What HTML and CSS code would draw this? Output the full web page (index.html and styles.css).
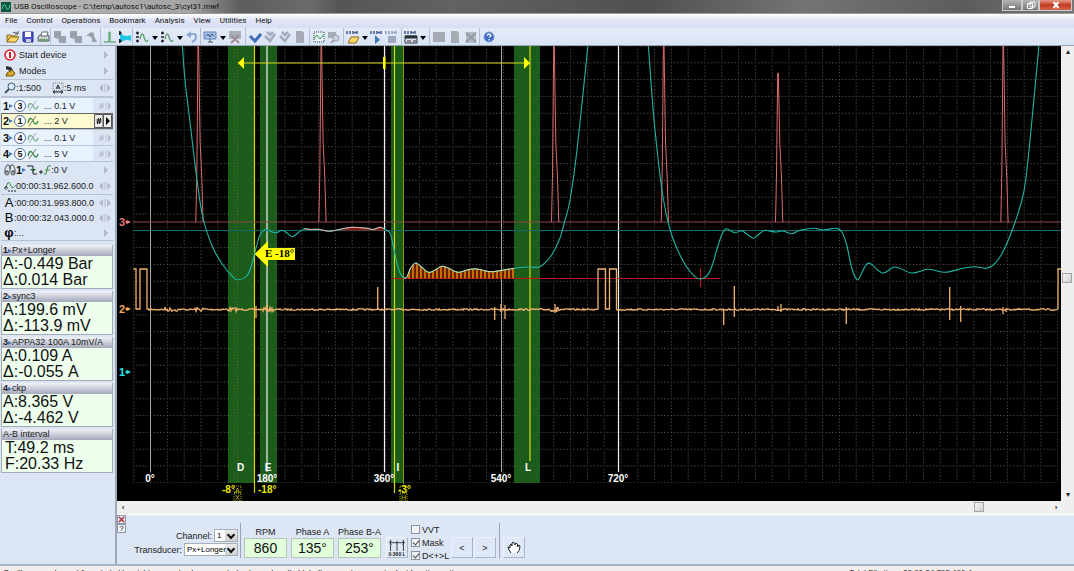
FILE: index.html
```html
<!DOCTYPE html>
<html lang="en">
<head>
<meta charset="utf-8">
<title>USB Oscilloscope</title>
<link rel="stylesheet" href="styles.css">
</head>
<body>
<svg class="defs" aria-hidden="true">
  <symbol id="i-open" viewBox="0 0 14 14"><path d="M1 12V5h4l1 1h5v2" fill="#f3c95a" stroke="#8a6a1c"/><path d="M1 12l3-5h9l-3 5z" fill="#ffd866" stroke="#8a6a1c"/><path d="M7 3q3-2 5 1M12 1v3H9" fill="none" stroke="#555"/></symbol>
  <symbol id="i-save" viewBox="0 0 14 14"><path d="M2 2h10v10H3l-1-1z" fill="#4b50c8" stroke="#2b2f91"/><path d="M4 2h6v5H4z" fill="#fff"/><path d="M5 9h5v3H5z" fill="#ccd"/></symbol>
  <symbol id="i-print" viewBox="0 0 14 14"><path d="M2 7l2-2h8l1 1v5H2z" fill="#c9d0cc" stroke="#556"/><path d="M5 6l1-4h6l-1 4z" fill="#fff" stroke="#667"/><path d="M3 9h9v3H3z" fill="#8a9a90"/><path d="M4 10h5" stroke="#4a4"/></symbol>
  <symbol id="i-copy" viewBox="0 0 14 14"><path d="M1 1h7v7H1zM6 6h7v7H6z" fill="#9ba1ad"/><path d="M3 8h3v3" fill="none" stroke="#9ba1ad"/></symbol>
  <symbol id="i-tool" viewBox="0 0 14 14"><path d="M1 6l5-4 3 1v3l3 6H7V8L4 6z" fill="#9ba1ad"/></symbol>
  <symbol id="i-pulse" viewBox="0 0 14 14"><path d="M1 12h5V2h1v10h6" fill="none" stroke="#3b9a4b"/></symbol>
  <symbol id="i-band" viewBox="0 0 14 14"><path d="M2 3l3 2q3 2 8 0v6q-4-2-8 0l-3 1z" fill="#1fc8e8"/><path d="M1.500 1l2 2-2 2zM1.500 9l2 2-2 2z" fill="#222" stroke="#222"/></symbol>
  <symbol id="i-wave" viewBox="0 0 14 14"><path d="M1 3h3M2.500 1.500v3M1 7h3M1 11h3M2.500 9.500v3" stroke="#222" stroke-width="1.300"/><path d="M5 9q2-9 4-2t4 3" fill="none" stroke="#5f9a6c" stroke-width="1.300"/></symbol>
  <symbol id="i-undo" viewBox="0 0 14 14"><path d="M4 5q7-3 7 2 0 3-4 5" fill="none" stroke="#8ba3d0" stroke-width="2"/><path d="M1 5l5-4v7z" fill="#8ba3d0"/></symbol>
  <symbol id="i-mon" viewBox="0 0 14 14"><path d="M1 2h12v7H1z" fill="#9fc0e8" stroke="#6a86b8"/><path d="M3 6l2-2 2 3 2-3 2 2M5 12h5M7 9v3" stroke="#456" fill="none"/></symbol>
  <symbol id="i-monx" viewBox="0 0 14 14"><path d="M1 1h12v8H1z" fill="#a9aeb9"/><path d="M3 5l8 8M11 5l-8 8" stroke="#a08c96" stroke-width="2"/></symbol>
  <symbol id="i-check" viewBox="0 0 14 14"><path d="M2 6l5 5 6-7" fill="none" stroke="currentColor" stroke-width="3"/></symbol>
  <symbol id="i-check2" viewBox="0 0 14 14"><path d="M2 6l5 5 5-7M4 2l3 3 3-3" fill="none" stroke="#a5abba" stroke-width="2.500"/></symbol>
  <symbol id="i-doc" viewBox="0 0 14 14"><path d="M3 1h6l2 2v10H3z" fill="#a6abb5"/></symbol>
  <symbol id="i-chart" viewBox="0 0 14 14"><path d="M2 2h10v10H2z" fill="#e7f3f8" stroke="#345" stroke-dasharray="1 1"/><path d="M2 9l3-4 3 4 4-5" fill="none" stroke="#3a9a4a"/></symbol>
  <symbol id="i-find" viewBox="0 0 14 14"><path d="M1 2h8v6H1z" fill="#a7adb8"/><circle cx="9" cy="8" r="3" fill="#ccd2de" stroke="#a7a0b8"/><path d="M7 10l-3 3" stroke="#a7a0b8" stroke-width="2"/></symbol>
  <symbol id="i-dots" viewBox="0 0 14 14"><path d="M1 1v3M4 1v3M7 1v3M8 2.500h2M11 1v3" stroke="#44548c" stroke-width="1.500"/></symbol>
  <symbol id="i-hand" viewBox="0 0 14 14"><path d="M4 12Q1 8 1 6l2 1V4l1-1 1 2V2l1.500-1L8 4l1-2 1.500 1V6L12 4l1 1q0 5-3 7" fill="#fff" stroke="#222"/></symbol>
  <symbol id="i-sine" viewBox="0 0 12 12"><path d="M1 8q2-8 5-2t5 0" fill="none" stroke="#398b43" stroke-width="1.400"/><path d="M2 11L9 1" stroke="#777"/></symbol>
  <symbol id="i-lr" viewBox="0 0 14 8"><path d="M5 0v8L1 4zM9 0v8l4-4z" fill="#b4bac6"/><path d="M7 0v8" stroke="#b4bac6"/></symbol>
  <symbol id="i-hr" viewBox="0 0 14 8"><path d="M3 1L2 7M5 1L4 7M1 3h5M1 5h5M8 0v8" stroke="#b4bac6" fill="none" stroke-width=".8"/><path d="M10 0v8l3-4z" fill="#b4bac6"/></symbol>
  <symbol id="i-r" viewBox="0 0 14 8"><path d="M6 0v8l4-4z" fill="#b4bac6"/></symbol>
</svg>

<div class="app">
  <header class="title">
    <svg class="logo" viewBox="0 0 10 10"><path d="M0 0h10v10H0z" fill="#0c5544"/><path d="M1 7q2-8 4-2t4-2" fill="none" stroke="#3fd39c"/></svg>
    <h1>USB Oscilloscope - C:\temp\autosc1\autosc_3\cyl31.mwf</h1>
    <div class="winbtns">
      <button aria-label="Minimize"><svg viewBox="0 0 10 8"><path d="M2 5h6v2H2z" fill="#fff"/></svg></button><button class="mid" aria-label="Restore"><svg viewBox="0 0 10 8"><path d="M4 1h5v5H4zM1.500 2.500h5v5h-5z" fill="none" stroke="#fff"/></svg></button><button class="close" aria-label="Close"><svg viewBox="0 0 10 8"><path d="M2.500 1l5 6M7.500 1l-5 6" stroke="#fff" stroke-width="2"/></svg></button>
    </div>
  </header>
  <nav class="menu"><a href="#">File</a><a href="#">Control</a><a href="#">Operations</a><a href="#">Bookmark</a><a href="#">Analysis</a><a href="#">View</a><a href="#">Utilities</a><a href="#">Help</a></nav>

  <div class="toolbar">
    <div class="group tight"><button aria-label="Open"><svg><use href="#i-open"/></svg></button><button aria-label="Save"><svg><use href="#i-save"/></svg></button><button aria-label="Print"><svg><use href="#i-print"/></svg></button></div>
    <div class="group"><button aria-label="Copy view"><svg><use href="#i-copy"/></svg></button><button aria-label="Copy all"><svg><use href="#i-copy"/></svg></button><button aria-label="Tool"><svg><use href="#i-tool"/></svg></button></div>
    <div class="group tight"><button aria-label="Pulse"><svg><use href="#i-pulse"/></svg></button><button aria-label="Range"><svg><use href="#i-band"/></svg></button></div>
    <div class="group"><button aria-label="Vertical scale"><svg><use href="#i-wave"/></svg></button><button class="caret" aria-label="More scales"></button><button aria-label="Offset"><svg><use href="#i-wave"/></svg></button><button class="caret" aria-label="More offsets"></button><button aria-label="Undo"><svg><use href="#i-undo"/></svg></button></div>
    <div class="group loose"><button aria-label="Display"><svg><use href="#i-mon"/></svg></button><button class="caret" aria-label="More displays"></button><button aria-label="Close display"><svg><use href="#i-monx"/></svg></button></div>
    <div class="group tight loose"><button class="blue" aria-label="Apply"><svg><use href="#i-check"/></svg></button><button aria-label="Apply next"><svg><use href="#i-check2"/></svg></button><button aria-label="Apply all"><svg><use href="#i-check2"/></svg></button><button aria-label="Document"><svg><use href="#i-doc"/></svg></button></div>
    <div class="group tight loose"><button aria-label="Chart"><svg><use href="#i-chart"/></svg></button><button aria-label="Find"><svg><use href="#i-find"/></svg></button></div>
    <div class="group tight loose"><button aria-label="Open script"><svg viewBox="0 0 14 14"><use href="#i-dots" width="14" height="14"/><path d="M2 13l3-6h8l-3 6z" fill="#ffd866" stroke="#8a6a1c"/></svg></button><button class="caret" aria-label="More scripts"></button><button aria-label="Run script"><svg viewBox="0 0 14 14"><use href="#i-dots" width="14" height="14"/><path d="M5 5v9l5-4z" fill="#3c78b4"/></svg></button><button aria-label="Stop script"><svg viewBox="0 0 14 14"><use href="#i-dots" width="14" height="14" opacity=".5"/><path d="M3 6h8v7H3z" fill="#a0a8bd"/></svg></button></div>
    <div class="group tight loose"><button aria-label="Panels"><svg viewBox="0 0 14 14"><use href="#i-dots" width="14" height="14"/><path d="M1 6h12v7H1z" fill="#dde" stroke="#334"/><path d="M1 7h12" stroke="#233" stroke-width="3"/><path d="M3 11h4M9 11h3" stroke="#333"/></svg></button><button class="caret" aria-label="More panels"></button></div>
    <div class="group"><button aria-label="Grid"><svg viewBox="0 0 14 14"><path d="M1 2h12v10H1z" fill="#a5aab4"/></svg></button><button aria-label="Notes"><svg><use href="#i-doc"/></svg></button><button aria-label="Delete"><svg viewBox="0 0 14 14"><path d="M2 2h10v11H2z" fill="#b4b9c3"/><path d="M2 3l10 9M12 3L2 12" stroke="#929aa4" stroke-width="2"/></svg></button></div>
    <div class="group last"><button aria-label="Help"><svg viewBox="0 0 14 14"><circle cx="7" cy="7" r="5" fill="#3b6bc4" stroke="#7f9edb"/><path d="M5 5.500q2-2.500 4 0 0 1-2 2M7 9v1.500" fill="none" stroke="#fff" stroke-width="1.300"/></svg></button></div>
  </div>

  <div class="main">
    <aside class="side">
      <div class="row"><svg class="ic" viewBox="0 0 12 12"><circle cx="6" cy="6" r="5" fill="#fff" stroke="#e01f27" stroke-width="1.600"/><path d="M6 3v6" stroke="#e01f27" stroke-width="2"/></svg><span class="big">Start device</span><svg class="end"><use href="#i-r"/></svg></div>
      <div class="row"><svg class="ic" viewBox="0 0 12 12"><path d="M2 1l5 1 2 3-3 1-4-2z" fill="#333"/><path d="M3 8l5-3 3 3-2 3H2z" fill="#d9a927" stroke="#6d5212"/></svg><span class="big">Modes</span><svg class="end"><use href="#i-r"/></svg></div>
      <hr>
      <div class="row"><svg class="ic" viewBox="0 0 12 12"><circle cx="7.500" cy="4.500" r="3.500" fill="#d6ecff" stroke="#456"/><path d="M5 7l-4 4" stroke="#456" stroke-width="2"/></svg><span>:1:500</span><svg class="ic pan" viewBox="0 0 12 12"><path d="M1 1h10v8H1z" fill="none" stroke="#777" stroke-dasharray="1 1"/><path d="M4 7l2-4 2 4M5 6h2M2 10h8M3 8.500L1 10l2 1.500M9 8.500L11 10l-2 1.500" fill="none" stroke="#222"/></svg><span>:5 ms</span><svg class="end"><use href="#i-lr"/></svg></div>
      <hr>
      <div class="row ch"><b>1</b><i></i><em>3</em><svg class="ic dim"><use href="#i-sine"/></svg><span>... 0.1 V</span><svg class="end"><use href="#i-hr"/></svg></div>
      <div class="row ch on"><b>2</b><i></i><em>1</em><svg class="ic"><use href="#i-sine"/></svg><span>... 2 V</span><svg class="end act" viewBox="0 0 18 14"><path d="M0 0h18v14H0z" fill="#ececec"/><path d="M.500 .500h8.500v13H.500zM9.500 .500h8v13h-8z" fill="none" stroke="#555"/><path d="M12 3v8l4-4z" fill="#000"/><path d="M4.500 4l-1 6M6.500 4l-1 6M2.500 6h5M2.500 8h5" stroke="#000" stroke-width=".9"/></svg></div>
      <div class="row ch"><b>3</b><i></i><em>4</em><svg class="ic dim"><use href="#i-sine"/></svg><span>... 0.1 V</span><svg class="end"><use href="#i-hr"/></svg></div>
      <div class="row ch"><b>4</b><i></i><em>5</em><svg class="ic"><use href="#i-sine"/></svg><span>... 5 V</span><svg class="end"><use href="#i-hr"/></svg></div>
      <hr>
      <div class="row trig"><svg class="ic" viewBox="0 0 12 12"><path d="M1 9V5l2-4h2l1 4 1-4h2l2 4v4M3 6v4M9 6v4M6 4v4" fill="none" stroke="#555"/><circle cx="3" cy="9" r="2" fill="none" stroke="#555"/><circle cx="9" cy="9" r="2" fill="none" stroke="#555"/></svg><b>1</b><i></i><svg class="ic" viewBox="0 0 12 12"><path d="M1 2h6v8h4" fill="none" stroke="#222"/><path d="M4 5h6L7 8z" fill="#263"/></svg><svg class="ic" viewBox="0 0 12 12"><path d="M0 8h4M2 6v4" stroke="#222"/><path d="M5 10h2l2-8h3M6 6h5" fill="none" stroke="#3c8b43"/></svg><span>:0 V</span><svg class="end"><use href="#i-r"/></svg></div>
      <div class="row"><svg class="ic" viewBox="0 0 12 12"><path d="M2 8q2-9 4-4t3 4 3-3" fill="none" stroke="#3c8b43"/><path d="M0 8h4M2 6v4M4 11h8" stroke="#222" stroke-dasharray="2 1"/></svg><span>00:00:31.962.600.0</span><svg class="end"><use href="#i-lr"/></svg></div>
      <hr>
      <div class="row low"><strong>A</strong><span>:00:00:31.993.800.0</span><svg class="end"><use href="#i-lr"/></svg></div>
      <div class="row low"><strong>B</strong><span>:00:00:32.043.000.0</span><svg class="end"><use href="#i-lr"/></svg></div>
      <div class="row low"><strong class="phi">φ</strong><span>:...</span><svg class="end"><use href="#i-r"/></svg></div>
      <hr>
      <div class="cards">
        <section><h2><b>1</b><i></i>Px+Longer</h2><p>A:-0.449 Bar<br>Δ:0.014 Bar</p></section>
        <section><h2><b>2</b><i></i>sync3</h2><p>A:199.6 mV<br>Δ:-113.9 mV</p></section>
        <section><h2><b>3</b><i></i>APPA32 100A 10mV/A</h2><p>A:0.109 A<br>Δ:-0.055 A</p></section>
        <section><h2><b>4</b><i></i>ckp</h2><p>A:8.365 V<br>Δ:-4.462 V</p></section>
        <section><h2>A-B interval</h2><p class="in">T:49.2 ms<br>F:20.33 Hz</p></section>
      </div>
    </aside>

    <div class="work">
      <div class="view">
        <svg class="scope" viewBox="117 46 944 455" role="img" aria-label="Waveforms">
          <defs>
            <pattern id="grid" x="133.300" y="62.300" width="16.800" height="16.800" patternUnits="userSpaceOnUse"><path d="M0 .500H16.800M.500 0V16.800" stroke="#6a6a6a" stroke-dasharray="1 2.360" fill="none"/></pattern>
            <pattern id="hatch" width="4" height="8" patternUnits="userSpaceOnUse"><path d="M0 0h4v8H0z" fill="#632000"/><path d="M1 0v8" stroke="#c86c08" stroke-width="2"/></pattern>
          </defs>
          <path d="M133 46H1058V483H133z" fill="url(#grid)"/>
          <g fill="#1b5c1b"><path d="M228 46h26v437h-26zM260 46h17v437h-17zM391 46h13v437h-13zM514 46h26v437h-26z"/></g>
          <path d="M228 46h26v437h-26zM260 46h17v437h-17zM514 46h26v437h-26z" fill="url(#grid)" opacity=".4"/>
          <path d="M150.500 46V472M501.500 46V472" stroke="#a5a5a5"/>
          <path d="M267 46V472M384.500 46V472M618.500 46V472" stroke="#f2f2f2" stroke-width="1.200"/>
          <path d="M237.500 46V484" stroke="#6b6410" stroke-dasharray="1 2"/>
          <path d="M403.500 46V484" stroke="#8f9a10"/>
          <path d="M254.500 46V493M394.500 46V493M530 46V461" stroke="#d7d711" stroke-width="1.200"/>
          <path d="M133 222H1061" stroke="#8a4a4a" stroke-width="1.200"/>
          <path d="M133 230.500H1061" stroke="#12686a"/>
          <path d="M391 278.500H720M700.500 268V287" stroke="#c01414"/>
          <path id="fill" fill="url(#hatch)"/>
          <path id="dark" fill="#8a1818"/>
          <path id="pink" fill="none" stroke="#d96c6c"/>
          <path id="cyan" fill="none" stroke="#1fb5a5" stroke-width="1.100"/>
          <path id="warm" fill="none" stroke="#f0b0a0"/>
          <path id="ripple" fill="none" stroke="#e3d9a0"/>
          <path id="tan" fill="none" stroke="#f2b26c" stroke-width="1.300"/>
          <path d="M238 63H530" stroke="#d7d711"/><path d="M238 63l6-6v12zM530 63l-6-6v12zM383 57h2.500v12H383z" fill="#ff0"/>
          <path d="M254.500 254L268 241v7h27v12h-27v7z" fill="#ff0"/>
          <text x="265" y="257" class="flag">E -18°</text>
          <g class="lbl mid"><text x="240.500" y="471">D</text><text x="268" y="471">E</text><text x="398" y="471">I</text><text x="528" y="471">L</text>
          <text x="150" y="482">0°</text><text x="267" y="482">180°</text><text x="384" y="482">360°</text><text x="501" y="482">540°</text><text x="618" y="482">720°</text></g>
          <g class="tag"><path d="M234 486h7v7h-7zM234 493h7v8h-7zM400 486h7v7h-7zM400 493h7v8h-7z"/><text x="235" y="493">A</text><text x="235" y="500">X</text><text x="401" y="500">H</text></g>
          <g class="lbl y"><text x="222" y="493">-8°</text><text x="258" y="493">-18°</text><text x="398" y="493">-3°</text></g>
          <g class="num"><g fill="#e57e7e"><text x="119" y="226">3</text><path d="M125 222l2-2 4 2-4 2z"/></g><g fill="#f2a65c"><text x="119" y="313">2</text><path d="M125 309l2-2 4 2-4 2z"/></g><g fill="#1fe8e8"><text x="119" y="376">1</text><path d="M125 372l2-2 4 2-4 2z"/></g></g>
        </svg>
        <div class="vbar"><button aria-label="Scroll up">▴</button><span class="gap a"></span><span class="thumb"></span><span class="gap b"></span><button aria-label="Scroll down">▾</button></div>
      </div>
      <div class="hbar"><button aria-label="Scroll left">‹</button><span class="gap a"></span><span class="thumb"></span><span class="gap b"></span><button aria-label="Scroll right">›</button></div>
      <div class="panel">
        <div class="grip"><button class="x" aria-label="Close panel"><svg viewBox="0 0 8 8"><path d="M1 1l6 6M7 1L1 7" stroke="#b3424e" stroke-width="2"/></svg></button><button aria-label="Panel help">?</button></div>
        <div class="picks">
          <div><label for="chan">Channel:</label><select id="chan"><option>1</option></select></div>
          <div><label for="trans">Transducer:</label><select id="trans" class="wide"><option>Px+Longer</option></select></div>
        </div>
        <div class="vr"></div>
        <dl class="reads"><div><dt>RPM</dt><dd>860</dd></div><div><dt>Phase A</dt><dd>135°</dd></div><div><dt>Phase B-A</dt><dd>253°</dd></div></dl>
        <button class="pb scale" aria-label="Degree scale"><svg viewBox="0 0 18 13"><path d="M1 4h16M3 2L1 4l2 2M15 2l2 2-2 2M2 1v12M9 2v11M16 1v12" stroke="#333" fill="none"/></svg><span>0·360 L</span></button>
        <div class="checks"><label><input type="checkbox">VVT</label><label><input type="checkbox" checked>Mask</label><label><input type="checkbox" checked>D&lt;+&gt;L</label></div>
        <button class="pb">&lt;</button><button class="pb">&gt;</button>
        <div class="vr"></div>
        <button class="pb" aria-label="Pan"><svg class="hand"><use href="#i-hand"/></svg></button>
      </div>
    </div>
  </div>
  <footer class="status"><span>Oscilloscope channel 1 control : Use right mouse to charge control : charge bandhold. Left mouse to request a fast function options</span><span class="time">Total File time: 00:00:34.793.496.4</span></footer>
</div>
<script src="scope.js"></script>
</body>
</html>
```
FILE: styles.css
```css
* { box-sizing: border-box; }
body { margin: 0; overflow: hidden; font: 9px "Liberation Sans", Arial, sans-serif; color: #222; }
button { padding: 0; border: 0; background: none; font: inherit; color: inherit; }
.defs { position: absolute; width: 0; height: 0; }
.app { display: flex; flex-direction: column; height: calc(100vh + 10px); background: #dbe5f4; }

.title { display: flex; align-items: flex-start; height: 14px; flex: none; padding-left: 1px; background: linear-gradient(90deg, #b9b9b9 0, #a3a3a3 190px, #5d5d5d 240px, #6b6b6b 310px, #555 340px, #626262 450px, #505050 60%, #747474 75%, #5c5c5c 90%, #777); border-bottom: 1px solid #999; }
.logo { width: 10px; height: 10px; margin-top: 2px; }
.title h1 { margin: 0 auto 0 3px; font: 8px/14px Roboto, "Noto Sans", sans-serif; color: #111; }
.winbtns { display: flex; margin-right: 2px; }
.winbtns button { display: flex; justify-content: center; align-items: center; width: 20px; height: 11px; background: linear-gradient(#b5b5b5, #777); border: 1px solid #ccc; border-top: 0; }
.winbtns .mid { width: 17px; }
.winbtns .close { width: 33px; background: linear-gradient(#e29a88, #c23a20 50%, #d2654a); }
.winbtns svg { width: 10px; height: 8px; }

.menu { display: flex; gap: 9px; flex: none; height: 14px; padding-left: 5px; background: linear-gradient(#fff, #e2e7f7 40%, #d7def2); font: 8px/14px Roboto, "Noto Sans", sans-serif; }
.menu a { color: #111; text-decoration: none; }
.toolbar { display: flex; flex: none; height: 18px; padding-left: 5px; background: linear-gradient(#e4ebf8, #d9e4f5); border-bottom: 1px solid #9aa5b5; }
.group { display: flex; align-items: center; margin-right: 1px; border-right: 1px solid #b6c0d0; }
.group.last { border: 0; }
.group.loose { padding-right: 2px; }
.group button { display: flex; justify-content: center; width: 16px; }
.group.tight button { width: 15px; }
.group svg { width: 14px; height: 14px; }
.group .blue { color: #3f6db5; }
.group .caret, .group.tight .caret { width: 9px; }
.caret::before { content: ""; margin-top: 2px; border: 3px solid transparent; border-top: 4px solid #000; border-bottom: 0; }

.main { display: flex; flex: 1; min-height: 0; }
.side { flex: none; width: 117px; padding: 1px 2px 0 1px; border-right: 2px solid #9fa8b8; }
.side hr { height: 1px; margin: 0; border: 0; background: #b7c1d0; }
.row { display: flex; align-items: center; height: 16px; padding: 0 1px 0 3px; white-space: nowrap; }
.row.low { height: 15px; }
.ic { flex: none; width: 12px; height: 12px; }
.row .big { margin-left: 3px; }
.pan { margin-left: 11px; }
.dim { opacity: .6; }
.end { flex: none; width: 14px; height: 8px; margin-left: auto; }
.row strong { width: 10px; font: 13px "Liberation Sans", sans-serif; color: #000; text-align: center; }
.row .phi { font-weight: 700; }
.row b { font: 700 11px "Liberation Sans", sans-serif; color: #111; }
.row i, h2 i { display: inline-block; border: 2px solid transparent; border-left: 4px solid #4a75b0; border-right: 0; }
.row em { width: 12px; height: 12px; margin: 0 1px; border: 1px solid #4f6fa6; border-radius: 50%; background: #fff; font: 700 9px/10px "Liberation Sans", sans-serif; text-align: center; color: #111; }
.ch { padding-left: 2px; border-top: 1px solid #b9c6d8; background: linear-gradient(90deg, #e9f2ff 92px, transparent 92px); }
.ch span { margin-left: 5px; }
.ch.on { padding: 0 0 0 1px; border: 1px solid #666; background: #fffbd0; }
.end.act { width: 18px; height: 14px; }
.trig .ic + .ic { margin-left: 1px; }
.cards { display: grid; gap: 2px; margin-top: 4px; }
.cards section { border: 1px solid #a3abb8; border-top: 0; background: #eeffee; }
.cards h2 { height: 11px; margin: 0; padding-left: 1px; background: linear-gradient(#f2f3f8, #a3a8ba); font: 9px/11px "Liberation Sans", sans-serif; color: #222; white-space: nowrap; }
.cards p { height: 32px; margin: 0; padding-left: 1px; font-size: 16px; line-height: 16px; color: #111; white-space: nowrap; }
.cards .in { padding-left: 3px; }

.work { display: flex; flex: 1; flex-direction: column; min-width: 0; }
.view { display: flex; flex: 1; min-height: 0; background: #000; }
.scope { flex: 1; min-width: 0; width: 100%; height: 100%; }
.lbl { font: 700 10px "Liberation Sans", sans-serif; fill: #fff; }
.lbl.mid { text-anchor: middle; }
.lbl.y { fill: #e8e800; }
.num { font: 700 11px "Liberation Sans", sans-serif; }
.flag { font: 700 11px "Liberation Serif", serif; }
.tag { font: 7px "Liberation Sans", sans-serif; fill: #cc0; }
.tag path { fill: none; stroke: #aa0; stroke-dasharray: 1 1; }
.vbar, .hbar { display: flex; flex: none; background: #efefef; font-size: 8px; }
.vbar { flex-direction: column; width: 13px; }
.hbar { height: 13px; }
.vbar button { height: 12px; line-height: 12px; }
.hbar button { width: 12px; font-weight: 700; }
.hbar button:last-child { margin-right: 12px; }
.thumb { flex: none; width: 10px; height: 10px; margin: 1px; border: 1px solid #a5a5a5; background: linear-gradient(135deg, #f8f8f8, #cfcfcf); }
.vbar .a { flex: 215; }
.vbar .b { flex: 205; }
.hbar .a { flex: 845; }
.hbar .b { flex: 65; }

.panel { display: flex; flex: none; align-items: flex-end; height: 50px; padding-bottom: 6px; border-top: 1px solid #fff; background: #dce6f4; }
.grip { display: flex; flex-direction: column; align-self: flex-start; width: 9px; }
.grip button { height: 9px; border: 1px solid #8c98ac; background: #eef2f8; font-size: 8px; line-height: 7px; }
.grip svg { display: block; width: 7px; height: 7px; }
.picks { display: grid; gap: 1px; width: 112px; margin-bottom: 2px; }
.picks div { position: relative; display: flex; justify-content: flex-end; align-items: center; gap: 2px; }
.picks select { width: 24px; height: 13px; padding: 0 0 0 2px; border: 1px solid #a7afbb; border-radius: 0; appearance: none; background: #fff linear-gradient(#e9e9e9, #cfcfcf) right / 12px 100% no-repeat; font: 8px "Liberation Sans", sans-serif; }
.picks .wide { width: 54px; }
.picks div::after { content: ""; position: absolute; right: 4px; top: 3px; width: 4px; height: 4px; border: solid #111; border-width: 0 2px 2px 0; transform: rotate(45deg); pointer-events: none; }
.vr { align-self: stretch; width: 1px; margin: 8px 3px 0 2px; background: #9aa3b1; }
.reads { display: flex; gap: 4px; margin: 0; }
.reads div { width: 43px; text-align: center; white-space: nowrap; }
.reads dd { height: 20px; margin: 0; border: 1px solid #b6c5ba; background: #e2ffdb; font-size: 14px; line-height: 18px; color: #111; }
.reads dt { height: 11px; line-height: 11px; }
.pb { display: flex; flex-direction: column; justify-content: center; align-items: center; width: 22px; height: 21px; margin-right: 1px; border: 1px solid #eef3fb; border-right-color: #a9b4c6; border-bottom-color: #a9b4c6; background: #dfe8f6; }
.scale { margin: 0 3px 0 5px; }
.scale svg { width: 18px; height: 12px; }
.scale span { font-size: 5px; font-weight: 700; }
.hand { width: 14px; height: 14px; }
.checks { display: grid; width: 40px; margin-bottom: -4px; }
.checks label { display: flex; align-items: center; gap: 2px; height: 13px; white-space: nowrap; }
.checks input { position: relative; flex: none; width: 9px; height: 9px; margin: 0; border: 1px solid #8b93a0; appearance: none; background: #f1f3f6; }
.checks input:checked::after { content: ""; position: absolute; left: 2px; top: 0; width: 3px; height: 5px; border: solid #444; border-width: 0 1px 1px 0; transform: rotate(40deg); }
.status { display: flex; flex: none; height: 17px; border-top: 2px solid #a9b3c0; background: #f1edec; font: 8px/14px "Liberation Sans", Arial, sans-serif; color: #111; padding: 0 102px 0 3px; justify-content: space-between; white-space: nowrap; }
```
FILE: scope.js
```js
const set = (id, d) => document.getElementById(id).setAttribute('d', d);

// Catmull-Rom spline through the flat list x, y, x, y, ...
function smooth(v) {
  const p = [];
  for (let i = 0; i < v.length; i += 2) p.push([v[i], v[i + 1]]);
  let d = `M${p[0]}`;
  for (let i = 0; i < p.length - 1; i++) {
    const a = p[i - 1] || p[i], b = p[i], c = p[i + 1], e = p[i + 2] || c;
    d += `C${b[0] + (c[0] - a[0]) / 6} ${b[1] + (c[1] - a[1]) / 6} ${c[0] - (e[0] - b[0]) / 6} ${c[1] - (e[1] - b[1]) / 6} ${c}`;
  }
  return d;
}

const warm = [298,233, 304,228.7, 311,229.5, 318,229.3, 327,231, 332,231, 340,229.3, 352,227.3, 367,228.3, 373,229.5, 380,227.3, 384.3,229];
const ripple = [404,278, 407,276.7, 410.7,268, 415.7,263, 420,265.7, 428.3,272.3, 435,270, 441.7,266.3, 448,268, 458,272.3, 468,269.7, 477,269, 490,271.7, 502,270.3, 514,268.3];
const cyan = [182.3,45, 185,80, 190,122, 196.7,178, 203,218, 213,248, 223,265, 233,277, 238,279.7, 246.7,276, 251.7,265, 256,248, 260,235, 266,229.3, 272,232, 277,232.6, 282,230.3, 287,233, 292.3,236.7,
  ...warm, 390,233, 393,245, 396.7,262, 400,273, ...ripple, 527,267, 538,267.3, 543,264.7, 551.7,255, 560,238, 565,220, 570,200, 577,150, 588,45];
const next = [648.3,45, 653.3,112, 658,158, 662.7,195, 669.3,227, 676.7,248, 686.7,267, 695,276.7, 700,279, 706.7,276, 711.7,267, 716.7,250, 721.7,235, 726,228.7, 735,232.7, 741.7,230.7, 748,235, 754,238.3, 759,234, 765,230.3, 775,232, 783,231, 791.7,233.7, 800,230.3, 815,228.3, 823,230, 835.7,228.3, 841.7,231.7, 846.7,245, 851.7,268, 856.7,279.3, 860,276.7, 865,266.7, 870,263.3, 882.7,273, 895,267, 911.7,273, 928,269.3, 945,272.3, 963,268.3, 975,266.7, 986.7,268.3, 995,263.3, 1003,251.7, 1013,228, 1022,200, 1025.7,180, 1031,130, 1039,45];

set('cyan', smooth(cyan) + smooth(next));
set('warm', smooth(warm.slice(2)));
set('ripple', smooth(ripple));
set('fill', smooth(ripple) + 'V278.500H404Z');
set('dark', smooth([340,230.5, 352,227.3, 367,228.3, 373,229.5, 380,227.3, 384.3,230.5]) + 'Z');

// Ignition current pulses: centre x and peak y
set('pink', [[198.3, 45], [321.3, 45], [554, 45], [663.7, 45], [778, 73], [1003.3, 45]]
  .map(([x, y]) => `M${x - 2.5} 222L${x - 1.5} 175L${x - .3} ${y}H${x + .3}L${x + 1.8} 142L${x + 3.5} 178L${x + 4.8} 222`).join(''));

// Sync trace: square pulses, noisy baseline, narrow spikes
let seed = 7;
const rnd = () => (seed = (seed * 16807) % 2147483647) / 2147483647;
const noise = (x1, x2) => {
  let d = '';
  for (let x = x1; x <= x2; x += 1) {
    const hot = [171, 201, 232, 268, 555].some(c => Math.abs(x - c) < 7);
    d += `L${x} ${309.5 + (rnd() - .5) * (hot ? 4 : 1.6)}`;
  }
  return d;
};
set('tan', 'M133.500 269H136V309H140V269H147V309' + noise(148, 598) + 'V269H605.500V309H609.500V269H616.500V309' + noise(617, 1058) + 'V269H1061'
  + [[256,306,318], [267,305,312], [377.7,287,310], [494.7,307,320], [501,304,312], [505,305,319], [555,304,313], [557,307,312], [723.7,309,325], [734.3,286,317], [778,306,311], [781,304,312], [846.3,307,324], [949.7,287,320], [960.7,306,322], [1003,307,314], [1006,308,312]]
    .map(([x, a, b]) => `M${x} ${a}V${b}`).join(''));
```
